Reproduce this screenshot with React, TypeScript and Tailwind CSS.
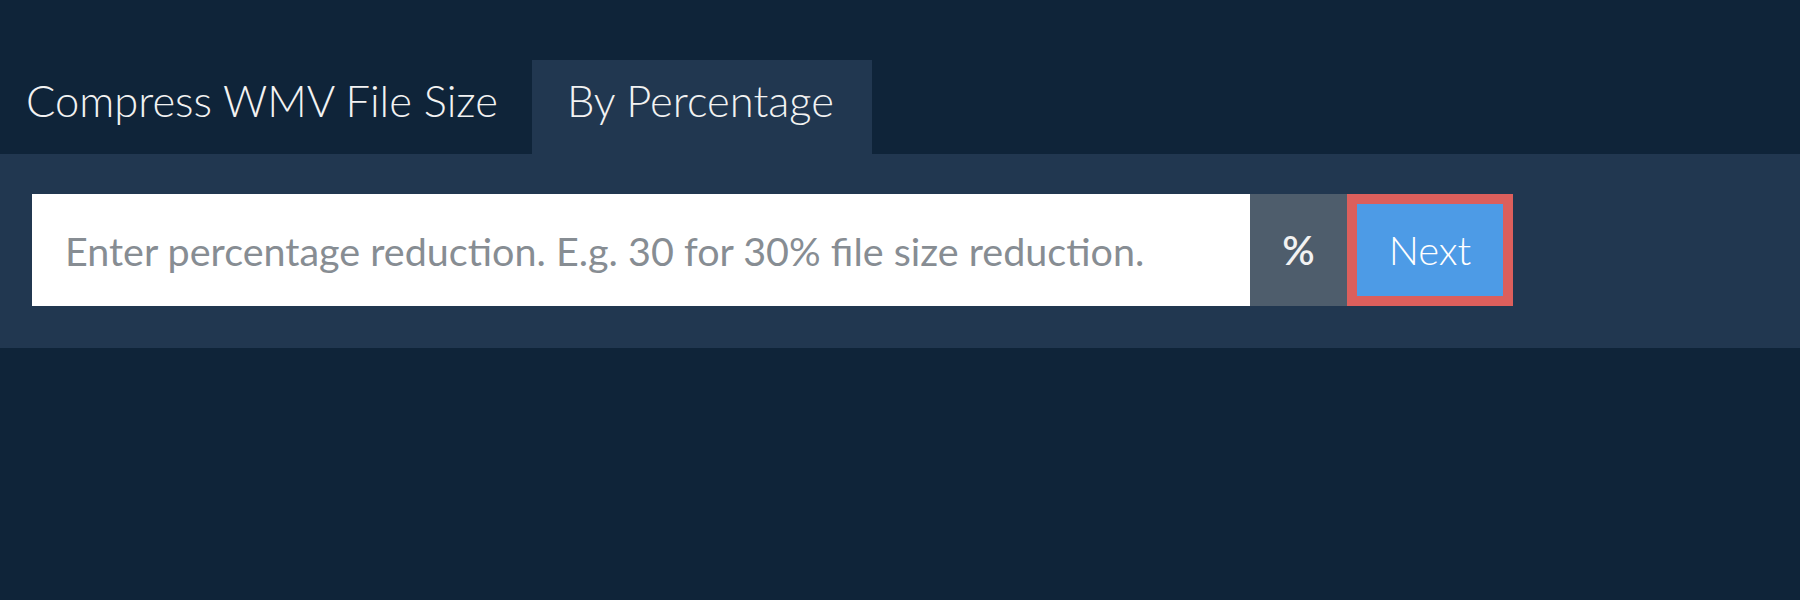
export default function App() {
  return (
    <div className="min-h-[600px] w-full bg-[#0f2439] pt-[60px] font-['Lato',sans-serif]">
      <div className="flex h-[94px] items-stretch">
        <div className="flex items-center pb-[12px] pl-[26px] pr-[34px] text-[43.5px] font-light text-[#f2f2f2]">
          Compress WMV File Size
        </div>
        <div className="flex items-center bg-[#213750] pl-[35px] pr-[38px] pb-[12px] text-[43.5px] font-light text-[#f2f2f2]">
          By Percentage
        </div>
      </div>
      <div className="bg-[#213750] px-[32px] pt-[40px] pb-[42px]">
        <form className="flex h-[112px]" onSubmit={(e) => e.preventDefault()}>
          <input
            type="text"
            placeholder="Enter percentage reduction. E.g. 30 for 30% file size reduction."
            className="h-full w-[1218px] bg-white px-[33px] text-[39.5px] text-[#333] placeholder-[#878d93] outline-none"
          />
          <div className="flex w-[97px] items-center justify-center bg-[#4e5d6c] text-[40px] font-semibold text-[#f2f2f2]">
            %
          </div>
          <button
            type="submit"
            className="h-full w-[166px] border-[10px] border-[#dc5f5c] bg-[#4d9be6] text-[40px] font-light text-white"
          >
            Next
          </button>
        </form>
      </div>
    </div>
  );
}
